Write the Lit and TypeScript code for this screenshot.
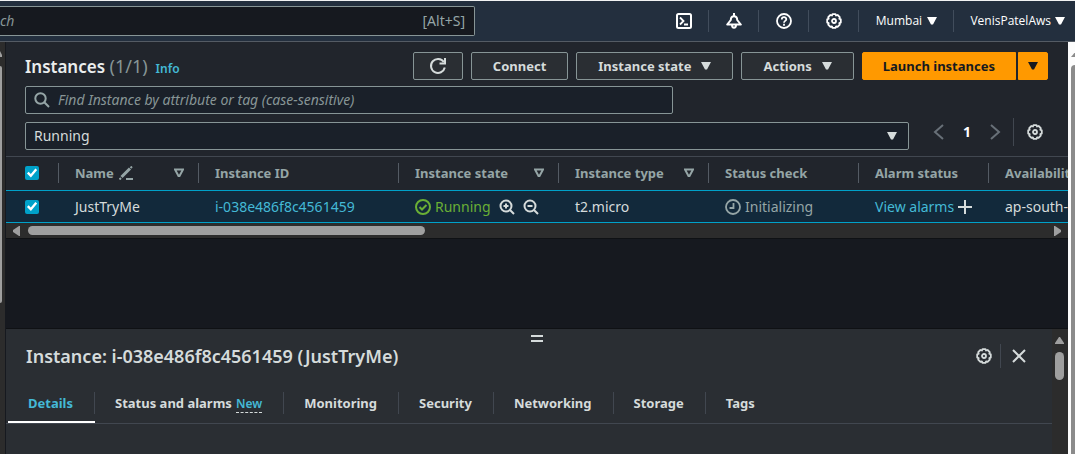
import { LitElement, html, css, svg } from "lit";
import { customElement, state } from "lit/decorators.js";

const gear = html`<svg width="16" height="16" viewBox="0 0 16 16" fill="none" stroke="currentColor" stroke-linejoin="round" aria-hidden="true">
  <path stroke-width="1.8" d="M6.500 1.200h3l.6 1.300 1.500-.5 2.200 2.200-.5 1.500 1.500.7v3.200l-1.500.6.5 1.500-2.200 2.200-1.500-.5-.6 1.400h-3l-.6-1.400-1.500.5-2.200-2.200.5-1.500-1.500-.6V6.400l1.500-.7-.5-1.500 2.200-2.200 1.500.5z" />
  <circle cx="8" cy="8" r="2" stroke-width="1.8" />
</svg>`;
const caret = html`<svg width="10" height="10" viewBox="0 0 10 10" aria-hidden="true"><path d="M0 1h10L6 8.500H4z" fill="currentColor" /></svg>`;
const sort = html`<svg width="10" height="10" viewBox="0 0 10 10" aria-hidden="true"><path d="M1 1.500h8L5.500 8h-1z" fill="none" stroke="currentColor" stroke-width="2" /></svg>`;
const zoomIcon = (plus: boolean) => html`<svg width="16" height="16" viewBox="0 0 16 16" fill="none" stroke="currentColor" stroke-width="2" aria-hidden="true">
  <circle cx="7" cy="7" r="5.500" /><path d="M11 11l4 4M4.500 7h5" />${plus ? svg`<path d="M7 4.500v5" />` : null}
</svg>`;

const tabs = ["Details", "Status and alarms", "Monitoring", "Security", "Networking", "Storage", "Tags"];

@customElement("app-root")
export class AppRoot extends LitElement {
  @state() private tab = "Details";

  static styles = css`
    :host {
      display: flex;
      flex-direction: column;
      height: 100vh;
      overflow: hidden;
      box-sizing: border-box;
      border-top: 1px solid #f2f3f3;
      background: #16191f;
      color: #d5dbdb;
      font: 14px/20px "Noto Sans", "Open Sans", sans-serif;
    }
    * { box-sizing: border-box; }
    svg { display: block; flex: none; }
    button, input, select { font: inherit; color: inherit; margin: 0; }
    a { color: #44b9d6; text-decoration: none; }
    button { cursor: pointer; }

    .nav {
      flex: none;
      display: flex;
      align-items: center;
      justify-content: space-between;
      height: 41px;
      background: #232f3e;
      border-bottom: 1px solid #545b64;
      color: #fff;
    }
    .nav-search {
      display: flex;
      align-items: center;
      flex: 0 1 475px;
      height: 30px;
      padding-right: 9px;
      background: #16191f;
      border: 1px solid #879596;
      border-left: 0;
      border-radius: 0 2px 2px 0;
      color: #95a5a6;
    }
    .nav-search input {
      flex: 1;
      min-width: 0;
      padding: 0;
      border: 0;
      outline: 0;
      background: none;
    }
    input::placeholder { color: #879596; font-style: italic; opacity: 1; }
    .nav-items { display: flex; align-items: center; }
    .nav-items button {
      display: flex;
      align-items: center;
      justify-content: center;
      gap: 4px;
      height: 22px;
      min-width: 50px;
      padding: 0 16px;
      border: 0;
      border-right: 1px solid #414d5c;
      background: none;
      font-family: "Open Sans", "Noto Sans", sans-serif;
      font-size: 12px;
    }
    .nav-items .region { min-width: 95px; gap: 5px; }
    .nav-items button:last-child { border-right: 0; padding-right: 10px; }

    .body { flex: 1; min-height: 0; display: flex; }
    .side { width: 5px; background: #2c2c2c; padding-top: 9px; color: #9f9f9f; }
    .side-thumb { width: 2px; height: 237px; margin-top: 9px; background: #9f9f9f; border-radius: 0 2px 2px 0; }
    .page-scroll {
      width: 7px;
      background: #fcfcfc;
      padding: 9px 0 0 3px;
      color: #8b8b8b;
      overflow: hidden;
    }
    .page-thumb { height: 100%; margin-top: 8px; background: #8b8b8b; border-radius: 5px 0 0 0; }
    main {
      flex: 1;
      min-width: 0;
      display: flex;
      flex-direction: column;
      border-left: 1px solid #16191f;
    }

    .top { background: #21252c; }
    .title-row {
      display: flex;
      align-items: center;
      gap: 8px;
      padding: 10px 20px 6px 19px;
    }
    .title { flex: 1; display: flex; align-items: baseline; gap: 8px; }
    h1, h2 { margin: 0; font-weight: 600; }
    h1 { font-size: 17px; line-height: 24px; color: #eaeded; }
    h1 span { font-size: 18px; font-weight: 400; color: #879596; }
    .info { font-size: 12px; font-weight: 600; }
    .btn {
      display: flex;
      align-items: center;
      justify-content: center;
      gap: 10px;
      height: 28px;
      padding: 0 21px;
      border: 1px solid #879596;
      border-radius: 2px;
      background: #2a2e33;
      font-size: 13px;
      font-weight: 700;
      white-space: nowrap;
    }
    .refresh { padding: 0 15px; }
    .split { display: flex; gap: 2px; }
    .primary { background: #f90; border-color: #f90; color: #16191f; }
    .split .primary:first-child { border-radius: 2px 0 0 2px; padding: 0 20px; }
    .split .primary:last-child { border-radius: 0 2px 2px 0; padding: 0 9px; }

    .filters {
      display: grid;
      grid-template-columns: 1fr 123px;
      gap: 8px 16px;
      padding: 0 20px 6px 19px;
    }
    .find, .choose {
      display: flex;
      align-items: center;
      height: 28px;
      border: 1px solid #879596;
      border-radius: 2px;
      background: #1a2029;
    }
    .find { width: 73.3%; padding-left: 8px; gap: 8px; color: #95a5a6; }
    .find input { flex: 1; min-width: 0; border: 0; padding: 0; outline: 0; background: none; }
    .choose { display: grid; grid-template-columns: 1fr 32px; }
    .choose select {
      grid-area: 1 / 1 / 2 / 3;
      appearance: none;
      width: 100%;
      height: 26px;
      padding: 0 8px;
      border: 0;
      background: none;
    }
    .choose svg { grid-area: 1 / 2; justify-self: center; pointer-events: none; }
    .pager {
      grid-area: 1 / 2 / 3 / 3;
      align-self: end;
      display: flex;
      align-items: center;
      height: 28px;
      margin-bottom: 4px;
    }
    .pager button, .tools button {
      display: flex;
      align-items: center;
      justify-content: center;
      padding: 0;
      border: 0;
      background: none;
    }
    .pager button { width: 28px; height: 28px; color: #687078; }
    .pager .page { color: #fff; font-weight: 700; }
    .pager .prefs { width: 34px; margin-left: 4px; padding-left: 8px; border-left: 1px solid #414750; color: #d5dbdb; }

    .scroller { overflow: hidden; border-top: 1px solid #414750; background: #21252c; }
    table { table-layout: fixed; width: 1183px; border-collapse: separate; border-spacing: 0; }
    .c-check { width: 53px; }
    .c-name { width: 140px; }
    .c-id { width: 200px; }
    .c-state { width: 160px; }
    .c-mid { width: 150px; }
    .c-alarm { width: 130px; }
    th, td { padding: 0; text-align: left; white-space: nowrap; }
    th { height: 33px; padding-top: 6px; vertical-align: top; color: #95a5a6; font-size: 13px; font-weight: 700; }
    .head {
      display: flex;
      align-items: center;
      gap: 5px;
      height: 20px;
      padding: 0 14px 0 16px;
      border-right: 1px solid #545b64;
    }
    .head .sort { margin-left: auto; }
    td { height: 33px; background: #12293b; border: solid #00a1c9; border-width: 1px 0; }
    .cell { display: flex; align-items: center; gap: 4px; padding: 0 16px; }
    .head.first, .cell.first { padding-left: 19px; }
    .zooms { display: flex; gap: 8px; margin-left: 4px; color: #d5dbdb; }
    .ok { color: #6aaf35; }
    .pending { color: #95a5a6; }
    input[type="checkbox"] {
      appearance: none;
      width: 14px;
      height: 14px;
      border-radius: 2px;
      background: #00a1c9;
      display: grid;
      place-items: center;
    }
    input[type="checkbox"]:checked::before {
      content: "";
      width: 12px;
      height: 12px;
      background: #fff;
      clip-path: polygon(8% 54%, 22% 40%, 40% 58%, 78% 12%, 93% 25%, 41% 88%);
    }
    .hbar {
      flex: none;
      display: flex;
      align-items: center;
      gap: 8px;
      height: 16px;
      padding: 0 7px;
      background: #2c2c2c;
      border-bottom: 1px solid #0f1114;
      color: #9f9f9f;
    }
    .htrack { flex: 1; }
    .hthumb { width: 39%; height: 9px; border-radius: 5px; background: #9f9f9f; }

    .space { flex: 1; }
    .panel {
      flex: none;
      display: flex;
      height: 126px;
      border-top: 1px solid #0f1114;
      background: #2a2e33;
    }
    .detail { flex: 1; min-width: 0; }
    .grip {
      display: block;
      width: 12px;
      height: 7px;
      margin: 6px auto 0;
      padding: 0;
      border: solid #d5dbdb;
      border-width: 2px 0;
      background: none;
    }
    .grip-row { padding-left: 16px; }
    .panel-head {
      display: flex;
      align-items: center;
      justify-content: space-between;
      padding: 2px 25px 0 20px;
    }
    h2 { font-size: 18px; line-height: 24px; }
    .tools { display: flex; }
    .tools button { width: 26px; height: 24px; }
    .tools button:first-child { border-right: 1px solid #414750; padding-right: 8px; }
    .tools button:last-child { padding-left: 9px; }
    .tabs {
      display: flex;
      height: 56px;
      padding: 15px 0 0 2px;
      border-bottom: 1px solid #414750;
    }
    .tabs button {
      display: flex;
      align-items: center;
      gap: 4px;
      height: 40px;
      padding: 0 22px 0 20px;
      border: 0;
      background: linear-gradient(#414750, #414750) right center / 1px 22px no-repeat;
      font-size: 13px;
      font-weight: 700;
      white-space: nowrap;
    }
    .tabs button:last-child { background: none; }
    .tabs .on {
      color: #44b9d6;
      background:
        linear-gradient(#fff, #fff) bottom / 100% 2px no-repeat,
        linear-gradient(#414750, #414750) right center / 1px 22px no-repeat;
    }
    .new { font-size: 12px; font-weight: 600; line-height: 17px; padding-top: 1px; color: #44b9d6; border-bottom: 1px dashed #d5dbdb; }
    .vbar { width: 16px; background: #2c2c2c; color: #9f9f9f; padding: 8px 4px 0 3px; }
    .vthumb { height: 28px; margin-top: 8px; border-radius: 5px; background: #9f9f9f; }
  `;

  render() {
    return html`
      <header class="nav">
        <label class="nav-search">
          <input type="text" placeholder="ch" aria-label="Search" />
          <span>[Alt+S]</span>
        </label>
        <nav class="nav-items">
          <button aria-label="CloudShell">
            <svg width="16" height="16" viewBox="0 0 16 16" fill="none" stroke="currentColor" stroke-width="2"><rect x="1" y="1" width="14" height="14" rx="1.500" /><path d="M4 4.500L7.500 8 4 11.500M8 11.500h4" stroke-width="1.800" /></svg>
          </button>
          <button aria-label="Notifications">
            <svg width="16" height="16" viewBox="0 0 16 16" fill="none" stroke="currentColor" stroke-width="2" stroke-linejoin="round"><path d="M8 0v2.500M4.800 7C4.800 2 11.200 2 11.200 7L14.800 11.500H1.200zM6 12c0 3.600 4 3.600 4 0" /></svg>
          </button>
          <button aria-label="Help">
            <svg width="16" height="16" viewBox="0 0 16 16" fill="none" stroke="currentColor" stroke-width="1.800"><circle cx="8" cy="8" r="7" /><path d="M5.800 6.500c0-3 4.500-3 4.500-.3C10.300 8 8 7.800 8 9.800M8 10.800v2" /></svg>
          </button>
          <button aria-label="Settings">${gear}</button>
          <button class="region">Mumbai ${caret}</button>
          <button>VenisPatelAws ${caret}</button>
        </nav>
      </header>
      <div class="body">
        <div class="side">
          <svg width="2" height="6" viewBox="0 0 2 6"><path d="M0 0l2 4v2H0z" fill="currentColor" /></svg>
          <div class="side-thumb"></div>
        </div>
        <main>
          <section class="top">
            <div class="title-row">
              <div class="title">
                <h1>Instances <span>(1/1)</span></h1>
                <a class="info" href="#">Info</a>
              </div>
              <button class="btn refresh" aria-label="Refresh">
                <svg width="18" height="18" viewBox="0 0 18 18" fill="none" stroke="currentColor" stroke-width="2"><path d="M15.800 10.500A7 7 0 1 1 14.800 5M16 1v5.500h-5.500" /></svg>
              </button>
              <button class="btn">Connect</button>
              <button class="btn">Instance state ${caret}</button>
              <button class="btn">Actions ${caret}</button>
              <div class="split">
                <button class="btn primary">Launch instances</button>
                <button class="btn primary" aria-label="More launch options">${caret}</button>
              </div>
            </div>
            <div class="filters">
              <label class="find">
                <svg width="16" height="16" viewBox="0 0 16 16" fill="none" stroke="currentColor" stroke-width="2"><circle cx="6.500" cy="6.500" r="5.200" /><path d="M10.300 10.300L15 15" /></svg>
                <input type="text" placeholder="Find Instance by attribute or tag (case-sensitive)" aria-label="Find instance" />
              </label>
              <label class="choose">
                <select aria-label="Instance state filter"><option>Running</option></select>
                ${caret}
              </label>
              <div class="pager">
                <button aria-label="Previous page"><svg width="16" height="16" viewBox="0 0 16 16" fill="none" stroke="currentColor" stroke-width="2"><path d="M12 1L4 8l8 7" /></svg></button>
                <button class="page">1</button>
                <button aria-label="Next page"><svg width="16" height="16" viewBox="0 0 16 16" fill="none" stroke="currentColor" stroke-width="2"><path d="M4 1l8 7-8 7" /></svg></button>
                <button class="prefs" aria-label="Preferences">${gear}</button>
              </div>
            </div>
          </section>
          <div class="scroller">
            <table>
              <colgroup>
                <col class="c-check" /><col class="c-name" /><col class="c-id" /><col class="c-state" />
                <col class="c-mid" /><col class="c-mid" /><col class="c-alarm" /><col />
              </colgroup>
              <thead>
                <tr>
                  <th><div class="head first"><input type="checkbox" checked aria-label="Select all" /></div></th>
                  <th><div class="head">Name
                    <svg width="14" height="14" viewBox="0 0 14 14" fill="none" stroke="currentColor"><path d="M2.500 11L11 2.500" stroke-width="3" /><path d="M11.500 2l1.500-1.500M.5 13.500L2 12" stroke-width="2" /><path d="M7 13h7" stroke-width="2" /></svg>
                    <span class="sort">${sort}</span></div></th>
                  <th><div class="head">Instance ID</div></th>
                  <th><div class="head">Instance state <span class="sort">${sort}</span></div></th>
                  <th><div class="head">Instance type <span class="sort">${sort}</span></div></th>
                  <th><div class="head">Status check</div></th>
                  <th><div class="head">Alarm status</div></th>
                  <th><div class="head">Availability Zone</div></th>
                </tr>
              </thead>
              <tbody>
                <tr>
                  <td><div class="cell first"><input type="checkbox" checked aria-label="Select JustTryMe" /></div></td>
                  <td><div class="cell">JustTryMe</div></td>
                  <td><div class="cell"><a href="#">i-038e486f8c4561459</a></div></td>
                  <td><div class="cell ok">
                    <svg width="16" height="16" viewBox="0 0 16 16" fill="none" stroke="currentColor" stroke-width="2"><circle cx="8" cy="8" r="7" /><path d="M4.500 8l2.500 2.500L11.500 6" /></svg>
                    Running
                    <span class="zooms">${zoomIcon(true)}${zoomIcon(false)}</span>
                  </div></td>
                  <td><div class="cell">t2.micro</div></td>
                  <td><div class="cell pending">
                    <svg width="16" height="16" viewBox="0 0 16 16" fill="none" stroke="currentColor" stroke-width="1.800"><circle cx="8" cy="8" r="7" /><path d="M8.500 4v5H4.500" /></svg>
                    Initializing
                  </div></td>
                  <td><div class="cell"><a href="#">View alarms</a>
                    <svg width="14" height="14" viewBox="0 0 14 14" stroke="currentColor" stroke-width="2"><path d="M7 0v14M0 7h14" /></svg>
                  </div></td>
                  <td><div class="cell">ap-south-1a</div></td>
                </tr>
              </tbody>
            </table>
          </div>
          <div class="hbar">
            <svg width="7" height="10" viewBox="0 0 7 10"><path d="M6 0h1v10H6L0 6V4z" fill="currentColor" /></svg>
            <div class="htrack"><div class="hthumb"></div></div>
            <svg width="7" height="10" viewBox="0 0 7 10"><path d="M1 0H0v10h1l6-4V4z" fill="currentColor" /></svg>
          </div>
          <div class="space"></div>
          <section class="panel">
            <div class="detail">
              <div class="grip-row"><button class="grip" aria-label="Resize panel"></button></div>
              <div class="panel-head">
                <h2>Instance: i-038e486f8c4561459 (JustTryMe)</h2>
                <div class="tools">
                  <button aria-label="Panel preferences">${gear}</button>
                  <button aria-label="Close panel"><svg width="14" height="14" viewBox="0 0 14 14" stroke="currentColor" stroke-width="2"><path d="M1 1l12 12M13 1L1 13" /></svg></button>
                </div>
              </div>
              <div class="tabs" role="tablist">
                ${tabs.map(t => html`<button role="tab" class=${t === this.tab ? "on" : ""} aria-selected=${t === this.tab} @click=${() => (this.tab = t)}>${t}${t === "Status and alarms" ? html`<span class="new">New</span>` : null}</button>`)}
              </div>
            </div>
            <div class="vbar">
              <svg width="9" height="7" viewBox="0 0 9 7"><path d="M4 0h1l4 6v1H0V6z" fill="currentColor" /></svg>
              <div class="vthumb"></div>
            </div>
          </section>
        </main>
        <div class="page-scroll">
          <svg width="10" height="6" viewBox="0 0 10 6"><path d="M5 0l5 6H0z" fill="currentColor" /></svg>
          <div class="page-thumb"></div>
        </div>
      </div>
    `;
  }
}
